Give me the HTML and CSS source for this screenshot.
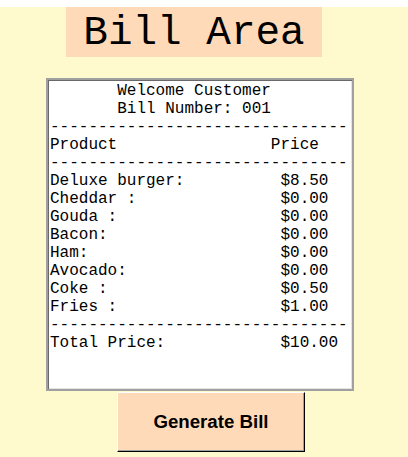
FILE: index.html
```html
<!DOCTYPE html>
<html>
<head>
<meta charset="utf-8">
<link rel="stylesheet" href="styles.css">
</head>
<body>
<div class="topstrip"></div>
<main class="app">
  <h1 class="title">Bill Area</h1>
  <pre class="bill">       Welcome Customer
       Bill Number: 001
-------------------------------
Product                Price
-------------------------------
Deluxe burger:          $8.50
Cheddar :               $0.00
Gouda :                 $0.00
Bacon:                  $0.00
Ham:                    $0.00
Avocado:                $0.00
Coke :                  $0.50
Fries :                 $1.00
-------------------------------
Total Price:            $10.00
</pre>
  <button class="gen">Generate Bill</button>
</main>
</body>
</html>
```

FILE: styles.css
```css
html, body {
  margin: 0;
  padding: 0;
}
body {
  background: #fffacd;
  width: 408px;
  height: 457px;
  overflow: hidden;
}
.topstrip {
  height: 7px;
  background: #ffffff;
}
.app {
  display: flex;
  flex-direction: column;
  align-items: flex-start;
}
.title {
  margin: 0 0 0 66px;
  width: 256px;
  height: 50px;
  background: #ffdab9;
  font-family: "Courier New", "Liberation Mono", monospace;
  font-weight: normal;
  font-size: 41px;
  line-height: 52px;
  text-align: center;
  color: #000;
  overflow: hidden;
}
.bill {
  margin: 21px 0 0 46px;
  box-sizing: border-box;
  width: 308px;
  height: 313px;
  padding: 1.5px 0 0 2px;
  background: #ffffff;
  border: 2px solid #a0a0a0;
  box-shadow: inset 1px 1px 0 #696969, inset -1px -1px 0 #e3e3e3;
  font-family: "Courier New", "Liberation Mono", monospace;
  font-size: 16px;
  line-height: 18px;
  color: #000;
  overflow: hidden;
  white-space: pre;
}
.gen {
  margin: 1px 0 0 117px;
  box-sizing: border-box;
  width: 188px;
  height: 60px;
  background: #ffdab9;
  border: 1px solid;
  border-color: #ffffff #000000 #000000 #ffffff;
  box-shadow: inset -1px -1px 0 #a0a0a0;
  font-family: Arial, "Liberation Sans", sans-serif;
  font-weight: bold;
  font-size: 18.67px;
  color: #000;
  padding: 0;
}
```
